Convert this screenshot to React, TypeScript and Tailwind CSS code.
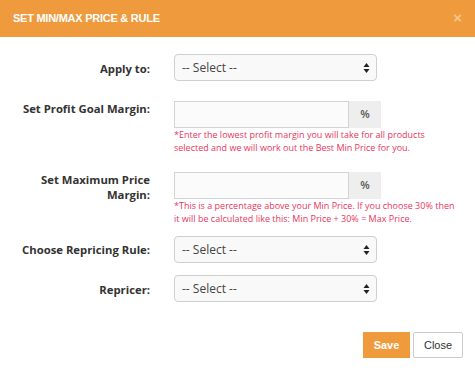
import React from "react";

const Arrows = () => (
  <svg width="7" height="11" viewBox="0 0 7 11" className="absolute right-[6px] top-1/2 -translate-y-1/2">
    <path d="M3.5 0.5 L6.5 4.5 L0.5 4.5 Z" fill="#222" />
    <path d="M3.5 10.5 L6.5 6.5 L0.5 6.5 Z" fill="#222" />
  </svg>
);

const SelectBox = () => (
  <div className="relative w-[203px] h-[27px] rounded-[4px] border border-[#cfcfcf] bg-[#f9f9f9] flex items-center pl-[7px] text-[12px] text-[#444]">
    -- Select --
    <Arrows />
  </div>
);

const PctInput = () => (
  <div className="flex h-[27px] w-[207px]">
    <div className="w-[175px] h-full border border-[#d3d3d3] bg-[#fbfbfb]" />
    <div className="flex-1 h-full bg-[#eeeeee] flex items-center justify-center text-[11px] font-semibold text-[#555]">%</div>
  </div>
);

const labelCls = "w-[150px] shrink-0 text-right text-[11.3px] font-bold text-[#333] leading-[15px]";

export default function App() {
  return (
    <div className="w-[475px] h-[383px] bg-white overflow-hidden" style={{ fontFamily: '"Open Sans", sans-serif' }}>
      <div className="h-[37px] bg-[#ef9a3c] flex items-center justify-between pl-[13px] pr-[13px]">
        <div className="text-white text-[11px] font-bold tracking-[-0.25px]" style={{ fontFamily: '"Liberation Sans", Arial, sans-serif' }}>
          SET MIN/MAX PRICE &amp; RULE
        </div>
        <div className="text-[#f7c48b] text-[15px] font-bold leading-none mb-[2px]" style={{ fontFamily: '"Liberation Sans", Arial, sans-serif' }}>×</div>
      </div>

      <div className="pt-[17px]">
        <div className="flex">
          <div className={labelCls + " pt-[7px]"}>Apply to:</div>
          <div className="ml-[24px]"><SelectBox /></div>
        </div>

        <div className="flex mt-[20px]">
          <div className={labelCls + " pt-0"}>Set Profit Goal Margin:</div>
          <div className="ml-[24px]">
            <PctInput />
            <div className="text-[9px] leading-[13px] text-[#e8365d] mt-[0px] w-[260px]">
              *Enter the lowest profit margin you will take for all products selected and we will work out the Best Min Price for you.
            </div>
          </div>
        </div>

        <div className="flex mt-[18px]">
          <div className={labelCls}>Set Maximum Price<br />Margin:</div>
          <div className="ml-[24px]">
            <PctInput />
            <div className="text-[9px] leading-[13px] text-[#e8365d] w-[282px]">
              *This is a percentage above your Min Price. If you choose 30% then it will be calculated like this: Min Price + 30% = Max Price.
            </div>
          </div>
        </div>

        <div className="flex mt-[11px]">
          <div className={labelCls + " pt-[6px]"}>Choose Repricing Rule:</div>
          <div className="ml-[24px]"><SelectBox /></div>
        </div>

        <div className="flex mt-[12px]">
          <div className={labelCls + " pt-[7px]"}>Repricer:</div>
          <div className="ml-[24px]"><SelectBox /></div>
        </div>

        <div className="flex justify-end gap-[3px] pr-[12px] mt-[30px]" style={{ fontFamily: '"Liberation Sans", Arial, sans-serif' }}>
          <div className="h-[26px] w-[47px] bg-[#ef9a3c] text-white text-[11px] font-bold flex items-center justify-center">Save</div>
          <div className="h-[26px] w-[50px] bg-white border border-[#cccccc] rounded-[2px] text-[#333] text-[11px] flex items-center justify-center">Close</div>
        </div>
      </div>
    </div>
  );
}
